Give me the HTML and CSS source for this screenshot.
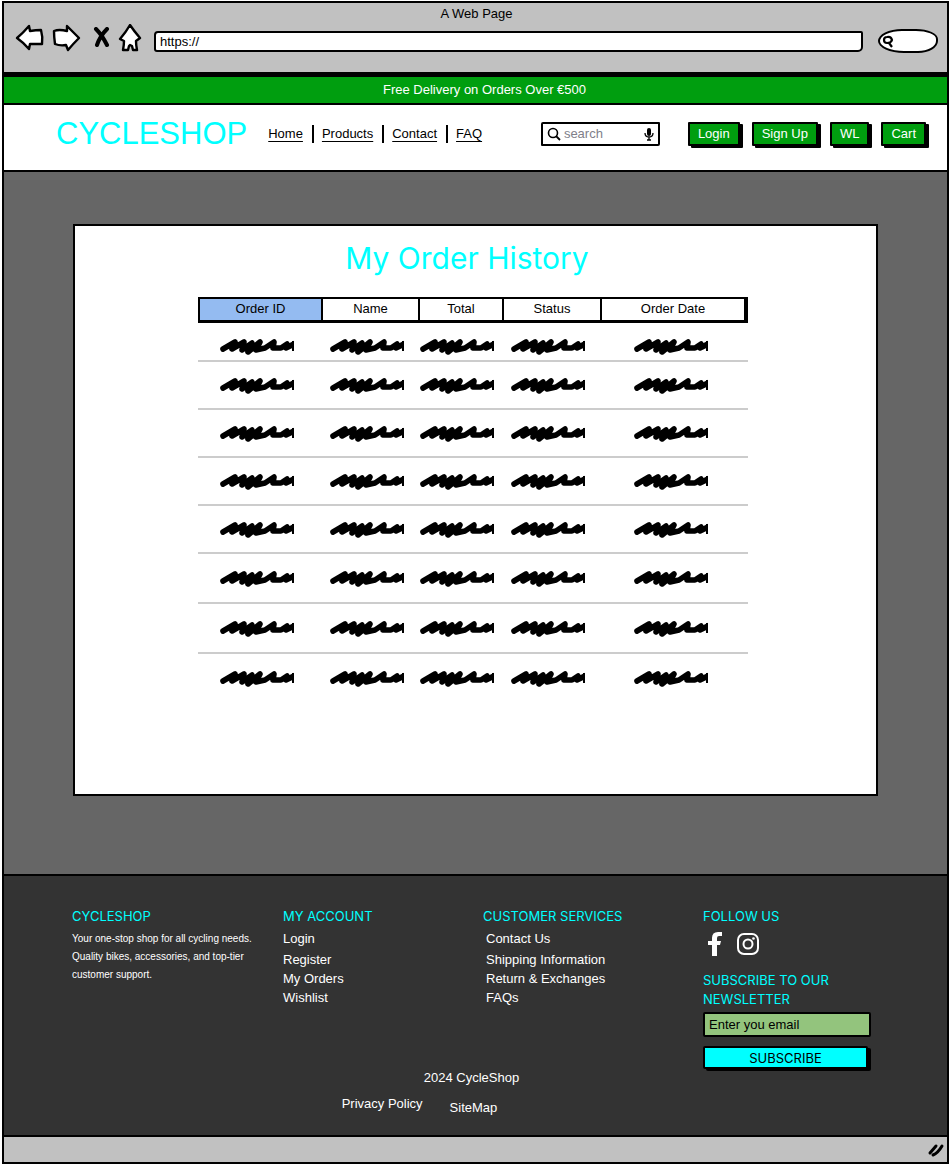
FILE: index.html
```html
<!DOCTYPE html>
<html lang="en">
<head>
<meta charset="utf-8">
<title>CycleShop - My Order History</title>
<link rel="stylesheet" href="styles.css">
</head>
<body>
<svg class="defs" width="0" height="0" aria-hidden="true">
  <symbol id="scribble" viewBox="0 0 74 18">
    <path d="M3 12 L15 5 L12 12 L24 5 L22 13 L32 6 L28 15 L40 5 L36 13 L45 11 L54 5 L53 11 L61 11 L67 7 L66 11 L76 6" fill="none" stroke="#000" stroke-width="5.600" stroke-linecap="round" stroke-linejoin="round"/>
    <path d="M24 10 L36 10" fill="none" stroke="#000" stroke-width="6"/>
    <path d="M73 4 L73 14" stroke="#000" stroke-width="2"/>
  </symbol>
</svg>
<div class="window">
  <div class="chrome">
    <div class="chrome-title">A Web Page</div>
    <div class="chrome-bar">
      <button class="tool back" aria-label="Back"><svg width="30" height="28" viewBox="0 0 30 28"><path d="M2 14 Q8 9 14 2 L15 7 Q21 6 26 6 Q28 13 27 20 Q21 20 15 20 L14 25 Q9 19 2 14 Z"/></svg></button>
      <button class="tool forward" aria-label="Forward"><svg width="30" height="28" viewBox="0 0 30 28"><path d="M2 7 Q7 5 15 7 L15 2 Q21 8 27 14 Q21 20 16 26 L14 21 Q8 22 3 20 Q2 13 2 7 Z"/></svg></button>
      <button class="tool stop" aria-label="Stop"><svg width="18" height="22" viewBox="0 0 18 22"><path class="cross" d="M3 2 Q9 8 14 18 M14 2 Q7 9 4 18"/></svg></button>
      <button class="tool home" aria-label="Home page"><svg width="24" height="28" viewBox="0 0 24 28"><path d="M12 1 Q16 7 22 14 L18 17 Q18 21 19 26 L15 26 L14 22 L12 21 L11 22 L10 26 L5 26 Q6 21 6 17 L2 15 Q8 8 12 1 Z"/></svg></button>
      <input class="address" type="text" value="https://" aria-label="Address">
      <label class="chrome-search">
        <svg width="12" height="13" viewBox="0 0 12 13"><path d="M5 2 Q9 1 10 5 Q9 8 5 8 Q2 8 2 5 Q2 2 5 2 M7 8 L10 12" fill="none" stroke="#000" stroke-width="2.200"/></svg>
        <input type="text" aria-label="Web search">
      </label>
    </div>
  </div>

  <div class="promo">Free Delivery on Orders Over €500</div>

  <header class="site-header">
    <div class="logo">CYCLESHOP</div>
    <nav class="site-nav">
      <a href="#">Home</a><a href="#">Products</a><a href="#">Contact</a><a href="#">FAQ</a>
    </nav>
    <label class="search">
      <svg width="14" height="14" viewBox="0 0 14 14"><circle cx="6" cy="6" r="4.500" fill="none" stroke="#000" stroke-width="1.600"/><path d="M9 9 L13 13" stroke="#000" stroke-width="1.800"/></svg>
      <input type="text" placeholder="search" aria-label="Search products">
      <svg width="10" height="14" viewBox="0 0 10 14"><rect x="3" y="1" width="4" height="8" rx="2"/><path d="M1 6 Q1 10 5 10 Q9 10 9 6 M5 10 L5 13 M3 13 L7 13" fill="none" stroke="#000" stroke-width="1.300"/></svg>
    </label>
    <div class="actions">
      <button class="btn">Login</button>
      <button class="btn">Sign Up</button>
      <button class="btn">WL</button>
      <button class="btn">Cart</button>
    </div>
  </header>

  <main class="main">
    <section class="card">
      <h1>My Order History</h1>
      <table class="orders">
        <colgroup><col class="c-id"><col class="c-name"><col class="c-total"><col class="c-status"><col class="c-date"></colgroup>
        <thead>
          <tr><th>Order ID</th><th>Name</th><th>Total</th><th>Status</th><th>Order Date</th></tr>
        </thead>
        <tbody>
          <tr class="first"><td><svg><use href="#scribble"/></svg></td><td><svg><use href="#scribble"/></svg></td><td><svg><use href="#scribble"/></svg></td><td><svg><use href="#scribble"/></svg></td><td><svg><use href="#scribble"/></svg></td></tr>
          <tr><td><svg><use href="#scribble"/></svg></td><td><svg><use href="#scribble"/></svg></td><td><svg><use href="#scribble"/></svg></td><td><svg><use href="#scribble"/></svg></td><td><svg><use href="#scribble"/></svg></td></tr>
          <tr><td><svg><use href="#scribble"/></svg></td><td><svg><use href="#scribble"/></svg></td><td><svg><use href="#scribble"/></svg></td><td><svg><use href="#scribble"/></svg></td><td><svg><use href="#scribble"/></svg></td></tr>
          <tr><td><svg><use href="#scribble"/></svg></td><td><svg><use href="#scribble"/></svg></td><td><svg><use href="#scribble"/></svg></td><td><svg><use href="#scribble"/></svg></td><td><svg><use href="#scribble"/></svg></td></tr>
          <tr><td><svg><use href="#scribble"/></svg></td><td><svg><use href="#scribble"/></svg></td><td><svg><use href="#scribble"/></svg></td><td><svg><use href="#scribble"/></svg></td><td><svg><use href="#scribble"/></svg></td></tr>
          <tr class="tall"><td><svg><use href="#scribble"/></svg></td><td><svg><use href="#scribble"/></svg></td><td><svg><use href="#scribble"/></svg></td><td><svg><use href="#scribble"/></svg></td><td><svg><use href="#scribble"/></svg></td></tr>
          <tr class="tall"><td><svg><use href="#scribble"/></svg></td><td><svg><use href="#scribble"/></svg></td><td><svg><use href="#scribble"/></svg></td><td><svg><use href="#scribble"/></svg></td><td><svg><use href="#scribble"/></svg></td></tr>
          <tr><td><svg><use href="#scribble"/></svg></td><td><svg><use href="#scribble"/></svg></td><td><svg><use href="#scribble"/></svg></td><td><svg><use href="#scribble"/></svg></td><td><svg><use href="#scribble"/></svg></td></tr>
        </tbody>
      </table>
    </section>
  </main>

  <footer class="footer">
    <div class="footer-cols">
      <section>
        <h2>CYCLESHOP</h2>
        <p class="about">Your one-stop shop for all cycling needs.<br>Quality bikes, accessories, and top-tier<br>customer support.</p>
      </section>
      <section>
        <h2>MY ACCOUNT</h2>
        <ul><li><a href="#">Login</a></li><li><a href="#">Register</a></li><li><a href="#">My Orders</a></li><li><a href="#">Wishlist</a></li></ul>
      </section>
      <section>
        <h2>CUSTOMER SERVICES</h2>
        <ul class="inset"><li><a href="#">Contact Us</a></li><li><a href="#">Shipping Information</a></li><li><a href="#">Return &amp; Exchanges</a></li><li><a href="#">FAQs</a></li></ul>
      </section>
      <section>
        <h2>FOLLOW US</h2>
        <div class="social">
          <a href="#" aria-label="Facebook"><svg width="14" height="24" viewBox="0 0 14 24"><path d="M4 24 V13 H0 V9 H4 V6 Q4 0 10 0 H14 V4 H11 Q9 4 9 6 V9 H13 L12 13 H9 V24 Z" fill="#fff"/></svg></a>
          <a href="#" aria-label="Instagram"><svg width="22" height="22" viewBox="0 0 22 22" fill="none" stroke="#fff" stroke-width="2"><rect x="1" y="1" width="20" height="20" rx="6"/><circle cx="11" cy="11" r="4.500"/><circle cx="16.500" cy="5.500" r="1.300" fill="#fff" stroke="none"/></svg></a>
        </div>
        <form class="newsletter">
          <label for="email">SUBSCRIBE TO OUR<br>NEWSLETTER</label>
          <input id="email" type="text" placeholder="Enter you email">
          <button type="button">SUBSCRIBE</button>
        </form>
      </section>
    </div>
    <div class="legal">
      <p>2024 CycleShop</p>
      <div class="legal-links"><a href="#">Privacy Policy</a><a class="sitemap" href="#">SiteMap</a></div>
    </div>
  </footer>

  <div class="statusbar">
    <svg width="18" height="16" viewBox="0 0 18 16"><path d="M3 11 L9 4 M6 13 Q11 11 15 4" fill="none" stroke="#000" stroke-width="3" stroke-linecap="round"/></svg>
  </div>
</div>
</body>
</html>
```
FILE: styles.css
```css
* { box-sizing: border-box; }

body {
  margin: 0;
  background: #fff;
  color: #000;
  font-family: "Liberation Sans", Arial, sans-serif;
  font-size: 13px;
  line-height: 18px;
}

input, button {
  font: inherit;
  color: inherit;
}

h1, h2, p, ul { margin: 0; padding: 0; }
ul { list-style: none; }
a { color: inherit; text-decoration: none; }
.defs { display: block; }

.window {
  display: flex;
  flex-direction: column;
  min-height: 100vh;
  padding: 1px 1px 1px 2px;
}

.chrome, .promo, .site-header, .main, .footer, .statusbar {
  border: solid #000;
  border-width: 0 2px;
}

/* Browser chrome */
.chrome {
  background: #c1c1c1;
  border-top-width: 2px;
  border-bottom-width: 5px;
  padding: 2px 9px 19px 11px;
}
.chrome-title { text-align: center; }
.chrome-bar {
  display: flex;
  align-items: center;
  height: 30px;
}
.tool {
  display: flex;
  padding: 0;
  border: 0;
  background: none;
}
.tool path {
  fill: #fff;
  stroke: #000;
  stroke-width: 2.4;
  stroke-linejoin: round;
}
.tool .cross {
  fill: none;
  stroke-width: 4;
  stroke-linecap: round;
}
.forward { margin-left: 7px; }
.stop { margin-left: 11px; }
.home { margin-left: 7px; }
.address {
  flex: 1;
  min-width: 0;
  height: 21px;
  margin: 6px 15px 0 12px;
  padding: 0 4px;
  border: 2px solid #000;
  border-radius: 4px 2px 5px 3px;
  background: #fff;
}
.chrome-search {
  display: flex;
  align-items: center;
  width: 60px;
  height: 24px;
  margin-top: 6px;
  padding-left: 2px;
  border: 2px solid #000;
  border-radius: 24px 22px 20px 26px / 12px 10px 12px 12px;
  background: #fff;
}
.chrome-search input {
  flex: 1;
  min-width: 0;
  border: 0;
  background: none;
}

.promo {
  padding: 4px 0 4px 18px;
  background: #009e0f;
  border-bottom-width: 2px;
  color: #fff;
  text-align: center;
}

/* Header */
.site-header {
  display: flex;
  align-items: center;
  height: 67px;
  padding: 0 21px 8px 52px;
  border-bottom-width: 2px;
  background: #fff;
}
.logo {
  color: #0ff;
  font-size: 31px;
  line-height: 36px;
}
.site-nav {
  display: flex;
  margin-left: 21px;
}
.site-nav a {
  text-decoration: underline;
  text-underline-offset: 3px;
}
.site-nav a + a {
  margin-left: 9px;
  padding-left: 8px;
  border-left: 2px solid #000;
}
.search {
  display: flex;
  align-items: center;
  width: 119px;
  height: 24px;
  margin-left: auto;
  padding: 0 4px;
  border: 2px solid #000;
  border-radius: 2px 1px 2px 1px;
}
.search input {
  flex: 1;
  min-width: 0;
  padding: 0 3px;
  border: 0;
  outline: 0;
}
.search input::placeholder { color: #80808a; opacity: 1; }
.actions {
  display: flex;
  gap: 12px;
  margin-left: 28px;
}
.btn {
  height: 24px;
  padding: 0 8px;
  border: 2px solid #000;
  border-radius: 1px;
  background: #009e0f;
  box-shadow: 3px 2px 0 #000;
  color: #fff;
  line-height: 18px;
}

/* Order history */
.main {
  flex: 1;
  padding: 52px 69px 78px 69px;
  border-bottom-width: 2px;
  background: #666;
}
.card {
  min-height: 572px;
  padding: 12px 128px 0 123px;
  border: 2px solid #000;
  background: #fff;
}
h1 {
  padding-right: 12px;
  color: #0ff;
  font-family: Inter, "Liberation Sans", sans-serif;
  font-size: 30px;
  font-weight: 400;
  line-height: 40px;
  text-align: center;
}
.orders {
  width: 100%;
  margin-top: 19px;
  border-spacing: 0;
  table-layout: fixed;
}
.c-id { width: 123px; }
.c-name { width: 97px; }
.c-total { width: 84px; }
.c-status { width: 98px; }
.orders th {
  height: 26px;
  padding: 0 0 1px;
  border: solid #000;
  border-width: 2px 0 3px 2px;
  font-weight: 400;
}
.orders th:first-child { background: #94bbf1; }
.orders th:last-child { border-right-width: 4px; }
.orders td {
  height: 48px;
  padding: 0 6px 0 0;
  border-bottom: 2px solid #ccc;
  text-align: center;
  vertical-align: middle;
}
.orders .first td { height: 39px; padding-top: 8px; }
.orders .tall td { height: 50px; }
.orders tr:last-child td { border-bottom: 0; }
.orders td svg {
  display: inline-block;
  width: 74px;
  height: 18px;
  vertical-align: middle;
}

/* Footer */
.footer {
  padding: 31px 76px 18px 68px;
  border-bottom-width: 2px;
  background: #333;
  color: #fff;
}
.footer-cols {
  display: grid;
  grid-template-columns: 211fr 200fr 220fr 168fr;
}
h2, .newsletter label {
  color: #0ff;
  font-family: Inter, "Liberation Sans", sans-serif;
  font-size: 13px;
  font-weight: 400;
  line-height: 19px;
  white-space: nowrap;
}
.about {
  padding-top: 4px;
  font-size: 10px;
  line-height: 18px;
  white-space: nowrap;
}
.footer li { line-height: 19px; }
.footer li:first-child { padding: 3px 0 2px; }
.inset { padding-left: 3px; }
.social {
  display: flex;
  align-items: center;
  gap: 15px;
  padding: 6px 5px 15px;
}
.social a { display: flex; }
.newsletter {
  display: flex;
  flex-direction: column;
}
.newsletter input {
  width: 100%;
  height: 25px;
  margin-top: 3px;
  padding: 0 4px;
  border: 2px solid #000;
  border-radius: 2px;
  background: #93c47d;
}
.newsletter input::placeholder { color: #000; opacity: 1; }
.newsletter button {
  height: 23px;
  margin: 9px 3px 0 0;
  padding: 0;
  border: 2px solid #000;
  border-radius: 2px;
  background: #0ff;
  box-shadow: 3px 2px 0 #000;
  color: #000;
  font-family: Inter, "Liberation Sans", sans-serif;
}
.legal { text-align: center; }
.legal-links {
  display: flex;
  justify-content: center;
  gap: 27px;
  padding: 8px 104px 0 0;
}
.sitemap { padding-top: 4px; }

.statusbar {
  display: flex;
  align-items: center;
  justify-content: flex-end;
  height: 27px;
  padding-right: 2px;
  border-bottom-width: 2px;
  background: #c1c1c1;
}
```
